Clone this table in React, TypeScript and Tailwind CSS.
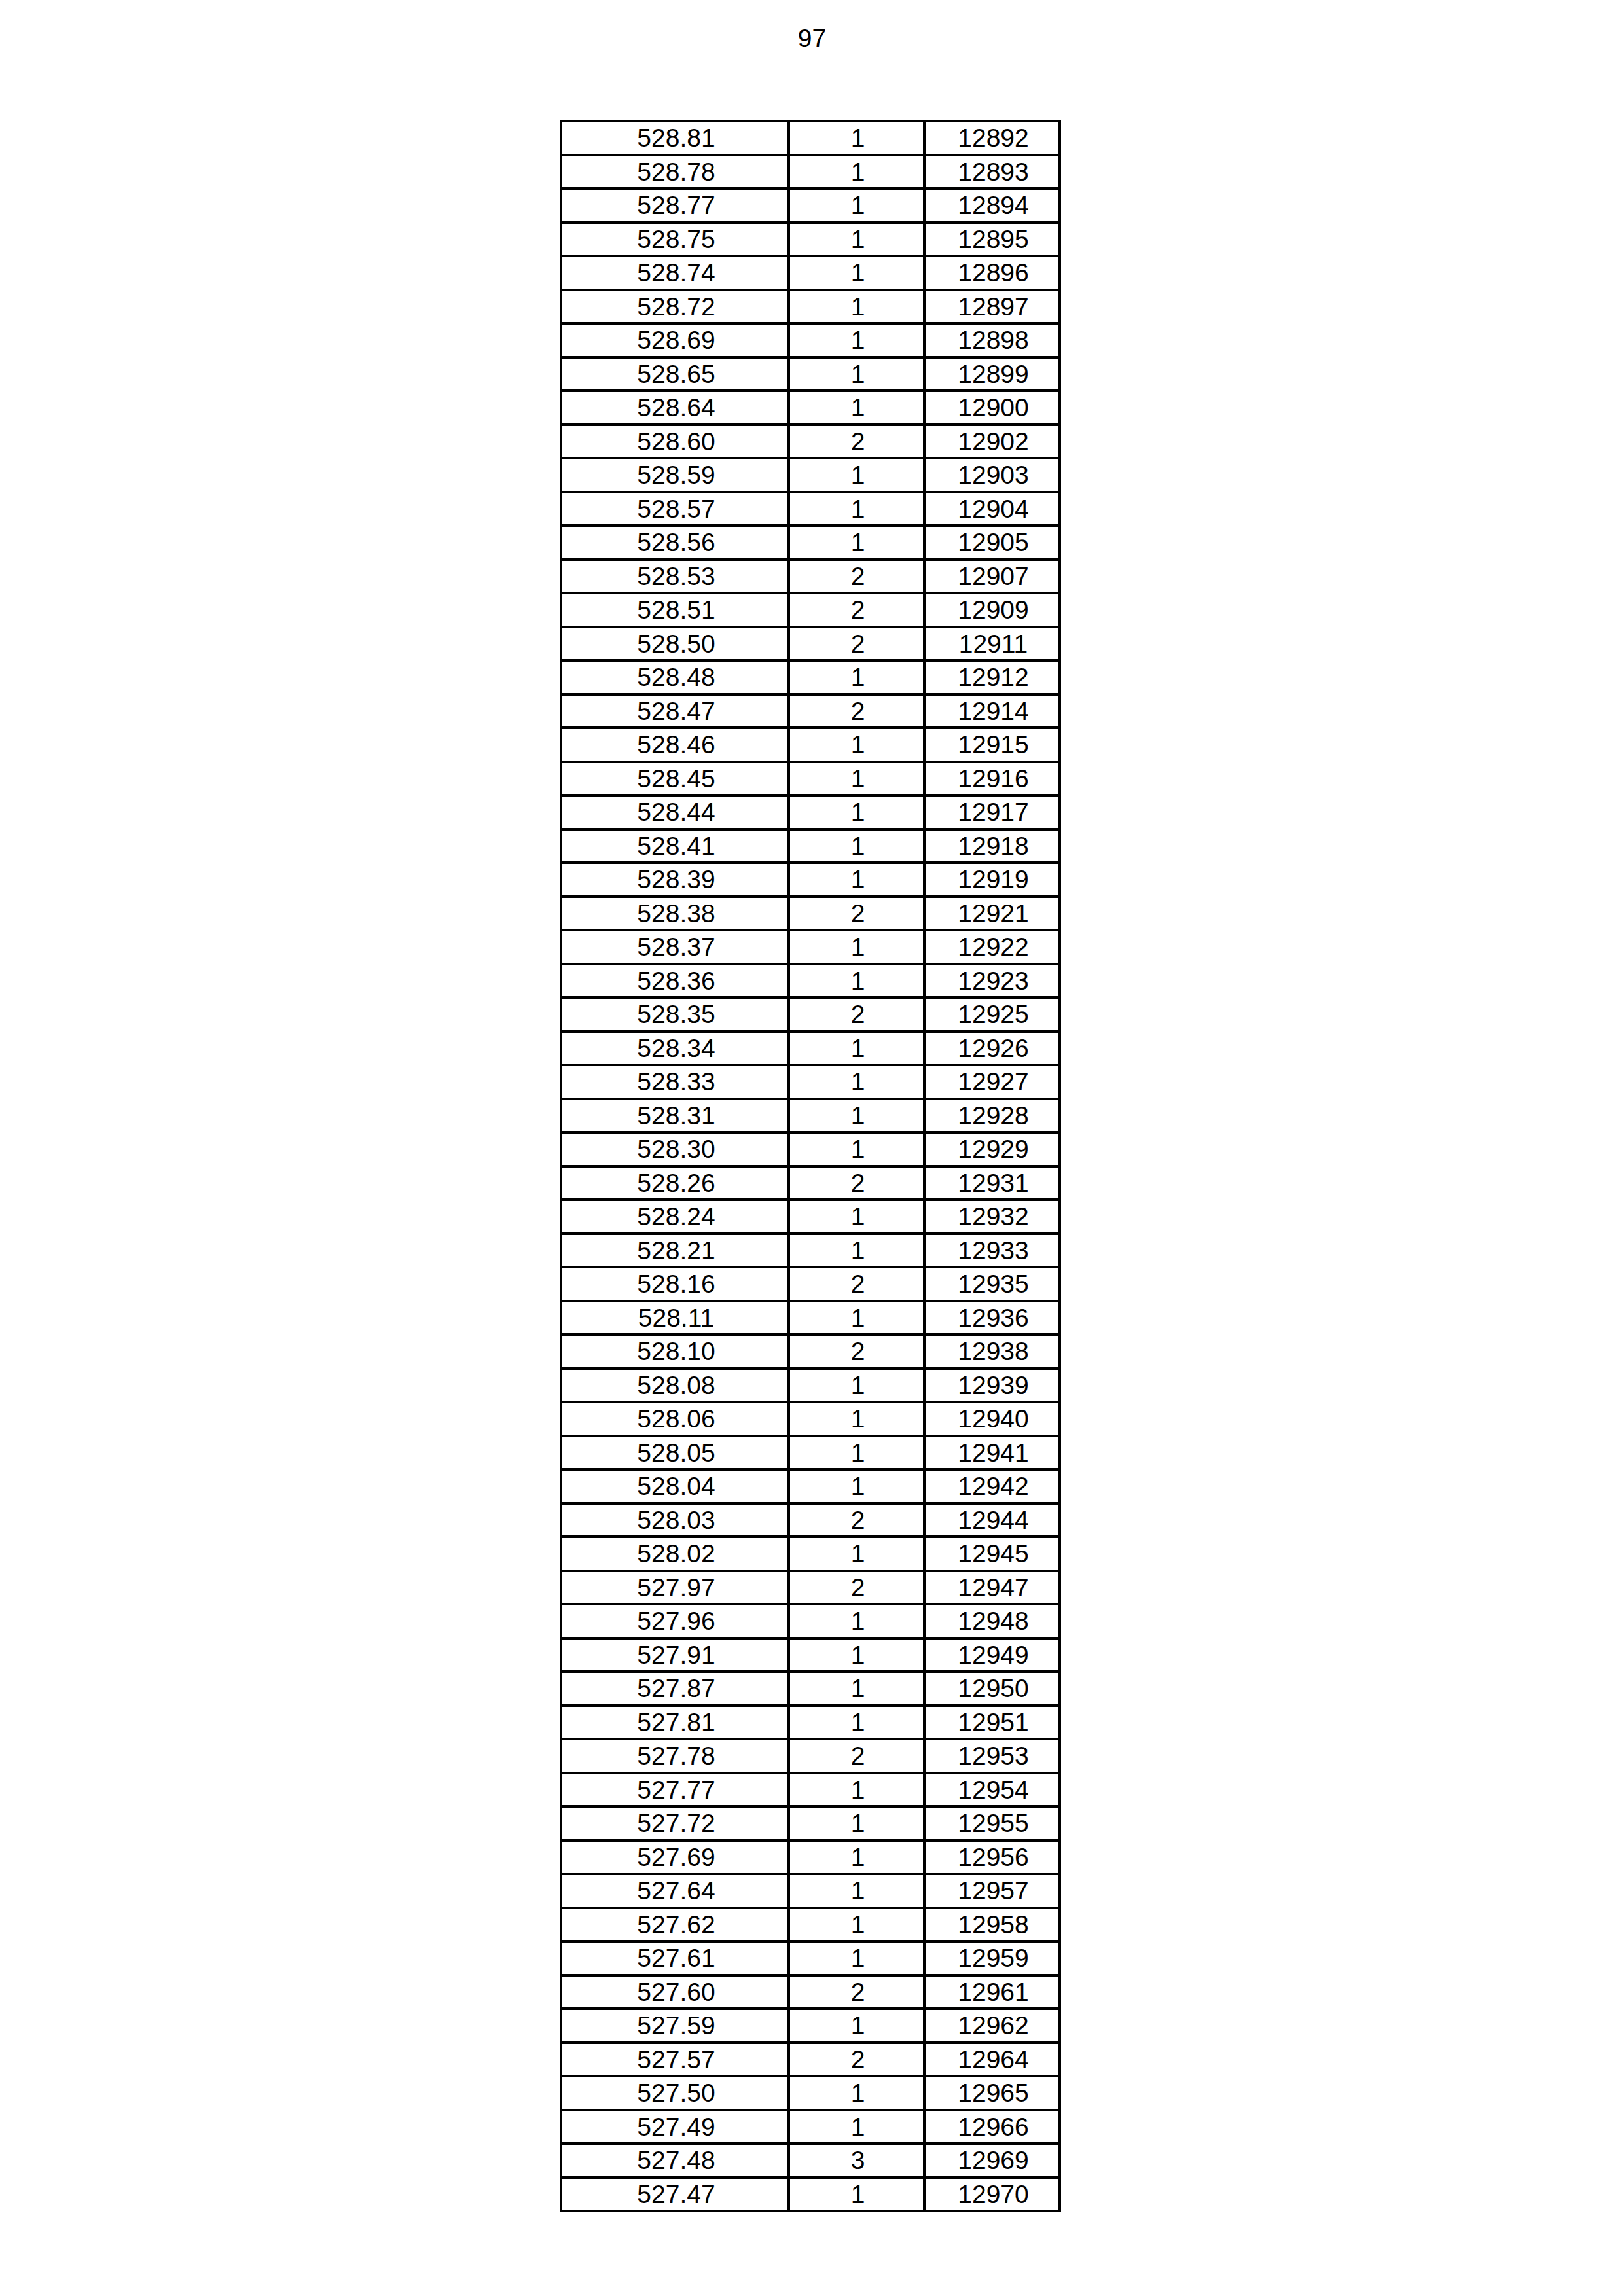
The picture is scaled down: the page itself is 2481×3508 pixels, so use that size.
const raw = `528.81 1 12892
528.78 1 12893
528.77 1 12894
528.75 1 12895
528.74 1 12896
528.72 1 12897
528.69 1 12898
528.65 1 12899
528.64 1 12900
528.60 2 12902
528.59 1 12903
528.57 1 12904
528.56 1 12905
528.53 2 12907
528.51 2 12909
528.50 2 12911
528.48 1 12912
528.47 2 12914
528.46 1 12915
528.45 1 12916
528.44 1 12917
528.41 1 12918
528.39 1 12919
528.38 2 12921
528.37 1 12922
528.36 1 12923
528.35 2 12925
528.34 1 12926
528.33 1 12927
528.31 1 12928
528.30 1 12929
528.26 2 12931
528.24 1 12932
528.21 1 12933
528.16 2 12935
528.11 1 12936
528.10 2 12938
528.08 1 12939
528.06 1 12940
528.05 1 12941
528.04 1 12942
528.03 2 12944
528.02 1 12945
527.97 2 12947
527.96 1 12948
527.91 1 12949
527.87 1 12950
527.81 1 12951
527.78 2 12953
527.77 1 12954
527.72 1 12955
527.69 1 12956
527.64 1 12957
527.62 1 12958
527.61 1 12959
527.60 2 12961
527.59 1 12962
527.57 2 12964
527.50 1 12965
527.49 1 12966
527.48 3 12969
527.47 1 12970`;

const rows = raw.split("\n").map((line) => line.split(" "));

export default function App() {
  return (
    <div className="w-[2481px] h-[3508px] bg-white text-black font-['Liberation_Sans',Arial,sans-serif] text-[39px] leading-none">
      <div className="pt-[39px] text-center">97</div>
      <div className="mt-[105px] ml-[855px] w-[766px] border-4 border-black border-b-0">
        {rows.map(([mass, count, total], i) => (
          <div key={i} className="flex h-[51.5px] border-b-4 border-black">
            <div className="w-[348px] border-r-4 border-black flex items-center justify-center pl-[4px]">{mass}</div>
            <div className="w-[207px] border-r-4 border-black flex items-center justify-center pl-[4px]">{count}</div>
            <div className="flex-1 flex items-center justify-center pl-[4px]">{total}</div>
          </div>
        ))}
      </div>
    </div>
  );
}
